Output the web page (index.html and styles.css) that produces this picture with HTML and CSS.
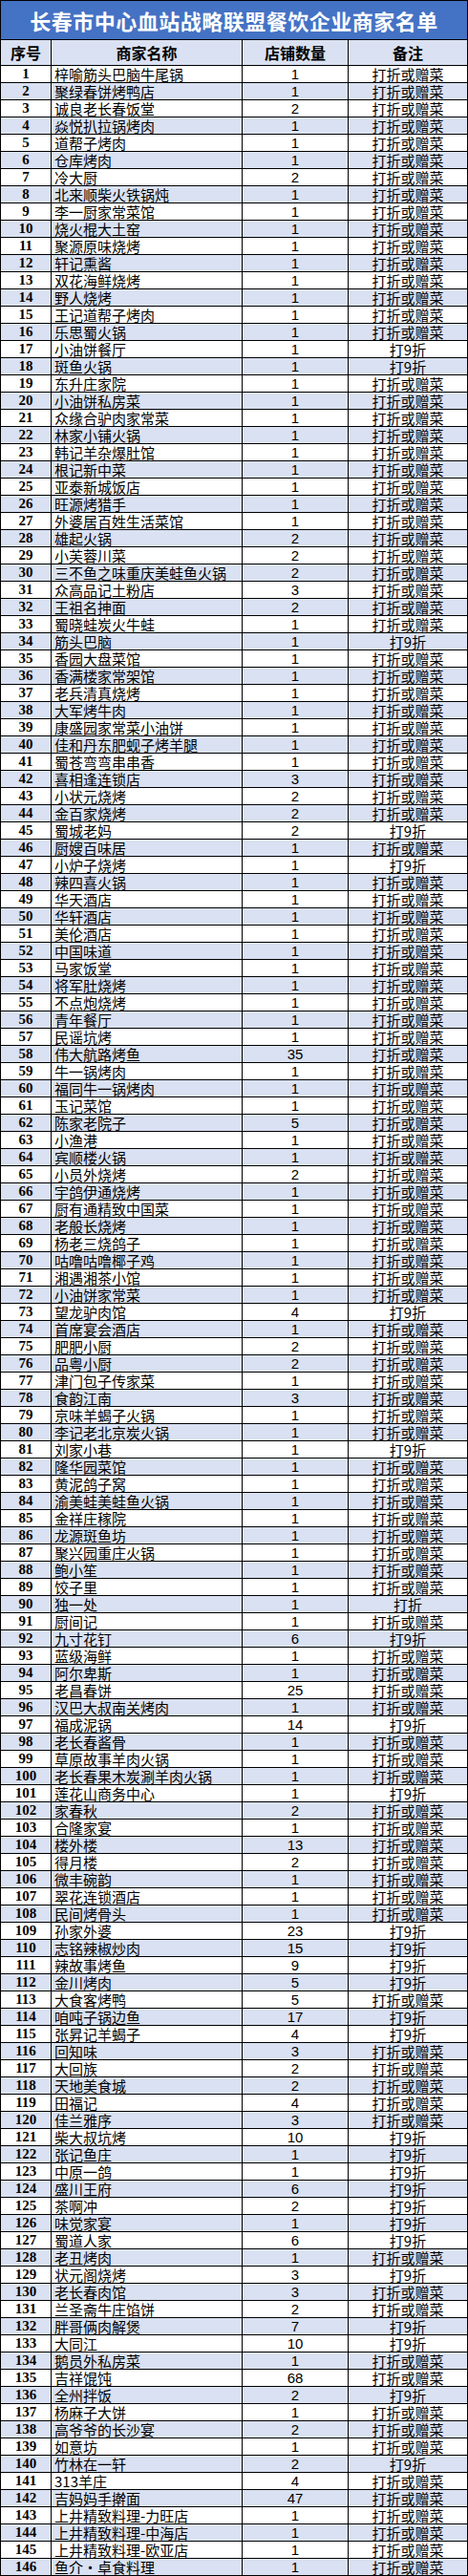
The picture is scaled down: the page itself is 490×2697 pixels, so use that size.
FILE: index.html
```html
<!DOCTYPE html>
<html lang="zh-CN">
<head>
<meta charset="utf-8">
<title>长春市中心血站战略联盟餐饮企业商家名单</title>
<link rel="stylesheet" href="styles.css">
</head>
<body>
<table class="list">
<colgroup><col class="c-no"><col class="c-name"><col class="c-count"><col class="c-note"></colgroup>
<thead>
<tr class="title-row"><th colspan="4" class="title">长春市中心血站战略联盟餐饮企业商家名单</th></tr>
<tr class="head-row"><th>序号</th><th>商家名称</th><th>店铺数量</th><th>备注</th></tr>
</thead>
<tbody>
<tr><td class="no">1</td><td class="name">梓喻筋头巴脑牛尾锅</td><td class="cnt">1</td><td class="note">打折或赠菜</td></tr>
<tr><td class="no">2</td><td class="name">聚绿春饼烤鸭店</td><td class="cnt">1</td><td class="note">打折或赠菜</td></tr>
<tr><td class="no">3</td><td class="name">诚良老长春饭堂</td><td class="cnt">2</td><td class="note">打折或赠菜</td></tr>
<tr><td class="no">4</td><td class="name">焱悦扒拉锅烤肉</td><td class="cnt">1</td><td class="note">打折或赠菜</td></tr>
<tr><td class="no">5</td><td class="name">道帮子烤肉</td><td class="cnt">1</td><td class="note">打折或赠菜</td></tr>
<tr><td class="no">6</td><td class="name">仓库烤肉</td><td class="cnt">1</td><td class="note">打折或赠菜</td></tr>
<tr><td class="no">7</td><td class="name">冷大厨</td><td class="cnt">2</td><td class="note">打折或赠菜</td></tr>
<tr><td class="no">8</td><td class="name">北来顺柴火铁锅炖</td><td class="cnt">1</td><td class="note">打折或赠菜</td></tr>
<tr><td class="no">9</td><td class="name">李一厨家常菜馆</td><td class="cnt">1</td><td class="note">打折或赠菜</td></tr>
<tr><td class="no">10</td><td class="name">烧火棍大土窑</td><td class="cnt">1</td><td class="note">打折或赠菜</td></tr>
<tr><td class="no">11</td><td class="name">聚源原味烧烤</td><td class="cnt">1</td><td class="note">打折或赠菜</td></tr>
<tr><td class="no">12</td><td class="name">轩记熏酱</td><td class="cnt">1</td><td class="note">打折或赠菜</td></tr>
<tr><td class="no">13</td><td class="name">双花海鲜烧烤</td><td class="cnt">1</td><td class="note">打折或赠菜</td></tr>
<tr><td class="no">14</td><td class="name">野人烧烤</td><td class="cnt">1</td><td class="note">打折或赠菜</td></tr>
<tr><td class="no">15</td><td class="name">王记道帮子烤肉</td><td class="cnt">1</td><td class="note">打折或赠菜</td></tr>
<tr><td class="no">16</td><td class="name">乐思蜀火锅</td><td class="cnt">1</td><td class="note">打折或赠菜</td></tr>
<tr><td class="no">17</td><td class="name">小油饼餐厅</td><td class="cnt">1</td><td class="note">打9折</td></tr>
<tr><td class="no">18</td><td class="name">斑鱼火锅</td><td class="cnt">1</td><td class="note">打9折</td></tr>
<tr><td class="no">19</td><td class="name">东升庄家院</td><td class="cnt">1</td><td class="note">打折或赠菜</td></tr>
<tr><td class="no">20</td><td class="name">小油饼私房菜</td><td class="cnt">1</td><td class="note">打折或赠菜</td></tr>
<tr><td class="no">21</td><td class="name">众缘合驴肉家常菜</td><td class="cnt">1</td><td class="note">打折或赠菜</td></tr>
<tr><td class="no">22</td><td class="name">林家小铺火锅</td><td class="cnt">1</td><td class="note">打折或赠菜</td></tr>
<tr><td class="no">23</td><td class="name">韩记羊杂爆肚馆</td><td class="cnt">1</td><td class="note">打折或赠菜</td></tr>
<tr><td class="no">24</td><td class="name">根记新中菜</td><td class="cnt">1</td><td class="note">打折或赠菜</td></tr>
<tr><td class="no">25</td><td class="name">亚泰新城饭店</td><td class="cnt">1</td><td class="note">打折或赠菜</td></tr>
<tr><td class="no">26</td><td class="name">旺源烤猎手</td><td class="cnt">1</td><td class="note">打折或赠菜</td></tr>
<tr><td class="no">27</td><td class="name">外婆居百姓生活菜馆</td><td class="cnt">1</td><td class="note">打折或赠菜</td></tr>
<tr><td class="no">28</td><td class="name">雄起火锅</td><td class="cnt">2</td><td class="note">打折或赠菜</td></tr>
<tr><td class="no">29</td><td class="name">小芙蓉川菜</td><td class="cnt">2</td><td class="note">打折或赠菜</td></tr>
<tr><td class="no">30</td><td class="name">三不鱼之味重庆美蛙鱼火锅</td><td class="cnt">2</td><td class="note">打折或赠菜</td></tr>
<tr><td class="no">31</td><td class="name">众高品记土粉店</td><td class="cnt">3</td><td class="note">打折或赠菜</td></tr>
<tr><td class="no">32</td><td class="name">王祖名抻面</td><td class="cnt">2</td><td class="note">打折或赠菜</td></tr>
<tr><td class="no">33</td><td class="name">蜀晓蛙炭火牛蛙</td><td class="cnt">1</td><td class="note">打折或赠菜</td></tr>
<tr><td class="no">34</td><td class="name">筋头巴脑</td><td class="cnt">1</td><td class="note">打9折</td></tr>
<tr><td class="no">35</td><td class="name">香园大盘菜馆</td><td class="cnt">1</td><td class="note">打折或赠菜</td></tr>
<tr><td class="no">36</td><td class="name">香满楼家常架馆</td><td class="cnt">1</td><td class="note">打折或赠菜</td></tr>
<tr><td class="no">37</td><td class="name">老兵清真烧烤</td><td class="cnt">1</td><td class="note">打折或赠菜</td></tr>
<tr><td class="no">38</td><td class="name">大军烤牛肉</td><td class="cnt">1</td><td class="note">打折或赠菜</td></tr>
<tr><td class="no">39</td><td class="name">康盛园家常菜小油饼</td><td class="cnt">1</td><td class="note">打折或赠菜</td></tr>
<tr><td class="no">40</td><td class="name">佳和丹东肥蚬子烤羊腿</td><td class="cnt">1</td><td class="note">打折或赠菜</td></tr>
<tr><td class="no">41</td><td class="name">蜀苍弯弯串串香</td><td class="cnt">1</td><td class="note">打折或赠菜</td></tr>
<tr><td class="no">42</td><td class="name">喜相逢连锁店</td><td class="cnt">3</td><td class="note">打折或赠菜</td></tr>
<tr><td class="no">43</td><td class="name">小状元烧烤</td><td class="cnt">2</td><td class="note">打折或赠菜</td></tr>
<tr><td class="no">44</td><td class="name">金百家烧烤</td><td class="cnt">2</td><td class="note">打折或赠菜</td></tr>
<tr><td class="no">45</td><td class="name">蜀城老妈</td><td class="cnt">2</td><td class="note">打9折</td></tr>
<tr><td class="no">46</td><td class="name">厨嫂百味居</td><td class="cnt">1</td><td class="note">打折或赠菜</td></tr>
<tr><td class="no">47</td><td class="name">小炉子烧烤</td><td class="cnt">1</td><td class="note">打9折</td></tr>
<tr><td class="no">48</td><td class="name">辣四喜火锅</td><td class="cnt">1</td><td class="note">打折或赠菜</td></tr>
<tr><td class="no">49</td><td class="name">华天酒店</td><td class="cnt">1</td><td class="note">打折或赠菜</td></tr>
<tr><td class="no">50</td><td class="name">华轩酒店</td><td class="cnt">1</td><td class="note">打折或赠菜</td></tr>
<tr><td class="no">51</td><td class="name">美伦酒店</td><td class="cnt">1</td><td class="note">打折或赠菜</td></tr>
<tr><td class="no">52</td><td class="name">中国味道</td><td class="cnt">1</td><td class="note">打折或赠菜</td></tr>
<tr><td class="no">53</td><td class="name">马家饭堂</td><td class="cnt">1</td><td class="note">打折或赠菜</td></tr>
<tr><td class="no">54</td><td class="name">将军肚烧烤</td><td class="cnt">1</td><td class="note">打折或赠菜</td></tr>
<tr><td class="no">55</td><td class="name">不点炮烧烤</td><td class="cnt">1</td><td class="note">打折或赠菜</td></tr>
<tr><td class="no">56</td><td class="name">青年餐厅</td><td class="cnt">1</td><td class="note">打折或赠菜</td></tr>
<tr><td class="no">57</td><td class="name">民谣坑烤</td><td class="cnt">1</td><td class="note">打折或赠菜</td></tr>
<tr><td class="no">58</td><td class="name">伟大航路烤鱼</td><td class="cnt">35</td><td class="note">打折或赠菜</td></tr>
<tr><td class="no">59</td><td class="name">牛一锅烤肉</td><td class="cnt">1</td><td class="note">打折或赠菜</td></tr>
<tr><td class="no">60</td><td class="name">福同牛一锅烤肉</td><td class="cnt">1</td><td class="note">打折或赠菜</td></tr>
<tr><td class="no">61</td><td class="name">玉记菜馆</td><td class="cnt">1</td><td class="note">打折或赠菜</td></tr>
<tr><td class="no">62</td><td class="name">陈家老院子</td><td class="cnt">5</td><td class="note">打折或赠菜</td></tr>
<tr><td class="no">63</td><td class="name">小渔港</td><td class="cnt">1</td><td class="note">打折或赠菜</td></tr>
<tr><td class="no">64</td><td class="name">宾顺楼火锅</td><td class="cnt">1</td><td class="note">打折或赠菜</td></tr>
<tr><td class="no">65</td><td class="name">小员外烧烤</td><td class="cnt">2</td><td class="note">打折或赠菜</td></tr>
<tr><td class="no">66</td><td class="name">宇鸽伊通烧烤</td><td class="cnt">1</td><td class="note">打折或赠菜</td></tr>
<tr><td class="no">67</td><td class="name">厨有通精致中国菜</td><td class="cnt">1</td><td class="note">打折或赠菜</td></tr>
<tr><td class="no">68</td><td class="name">老般长烧烤</td><td class="cnt">1</td><td class="note">打折或赠菜</td></tr>
<tr><td class="no">69</td><td class="name">杨老三烧鸽子</td><td class="cnt">1</td><td class="note">打折或赠菜</td></tr>
<tr><td class="no">70</td><td class="name">咕噜咕噜椰子鸡</td><td class="cnt">1</td><td class="note">打折或赠菜</td></tr>
<tr><td class="no">71</td><td class="name">湘遇湘茶小馆</td><td class="cnt">1</td><td class="note">打折或赠菜</td></tr>
<tr><td class="no">72</td><td class="name">小油饼家常菜</td><td class="cnt">1</td><td class="note">打折或赠菜</td></tr>
<tr><td class="no">73</td><td class="name">望龙驴肉馆</td><td class="cnt">4</td><td class="note">打9折</td></tr>
<tr><td class="no">74</td><td class="name">首席宴会酒店</td><td class="cnt">1</td><td class="note">打折或赠菜</td></tr>
<tr><td class="no">75</td><td class="name">肥肥小厨</td><td class="cnt">2</td><td class="note">打折或赠菜</td></tr>
<tr><td class="no">76</td><td class="name">品粤小厨</td><td class="cnt">2</td><td class="note">打折或赠菜</td></tr>
<tr><td class="no">77</td><td class="name">津门包子传家菜</td><td class="cnt">1</td><td class="note">打折或赠菜</td></tr>
<tr><td class="no">78</td><td class="name">食韵江南</td><td class="cnt">3</td><td class="note">打折或赠菜</td></tr>
<tr><td class="no">79</td><td class="name">京味羊蝎子火锅</td><td class="cnt">1</td><td class="note">打折或赠菜</td></tr>
<tr><td class="no">80</td><td class="name">李记老北京炭火锅</td><td class="cnt">1</td><td class="note">打折或赠菜</td></tr>
<tr><td class="no">81</td><td class="name">刘家小巷</td><td class="cnt">1</td><td class="note">打9折</td></tr>
<tr><td class="no">82</td><td class="name">隆华园菜馆</td><td class="cnt">1</td><td class="note">打折或赠菜</td></tr>
<tr><td class="no">83</td><td class="name">黄泥鸽子窝</td><td class="cnt">1</td><td class="note">打折或赠菜</td></tr>
<tr><td class="no">84</td><td class="name">渝美蛙美蛙鱼火锅</td><td class="cnt">1</td><td class="note">打折或赠菜</td></tr>
<tr><td class="no">85</td><td class="name">金祥庄稼院</td><td class="cnt">1</td><td class="note">打折或赠菜</td></tr>
<tr><td class="no">86</td><td class="name">龙源斑鱼坊</td><td class="cnt">1</td><td class="note">打折或赠菜</td></tr>
<tr><td class="no">87</td><td class="name">聚兴园重庄火锅</td><td class="cnt">1</td><td class="note">打折或赠菜</td></tr>
<tr><td class="no">88</td><td class="name">鲍小笙</td><td class="cnt">1</td><td class="note">打折或赠菜</td></tr>
<tr><td class="no">89</td><td class="name">饺子里</td><td class="cnt">1</td><td class="note">打折或赠菜</td></tr>
<tr><td class="no">90</td><td class="name">独一处</td><td class="cnt">1</td><td class="note">打折</td></tr>
<tr><td class="no">91</td><td class="name">厨间记</td><td class="cnt">1</td><td class="note">打折或赠菜</td></tr>
<tr><td class="no">92</td><td class="name">九寸花钉</td><td class="cnt">6</td><td class="note">打9折</td></tr>
<tr><td class="no">93</td><td class="name">蓝级海鲜</td><td class="cnt">1</td><td class="note">打折或赠菜</td></tr>
<tr><td class="no">94</td><td class="name">阿尔卑斯</td><td class="cnt">1</td><td class="note">打折或赠菜</td></tr>
<tr><td class="no">95</td><td class="name">老昌春饼</td><td class="cnt">25</td><td class="note">打折或赠菜</td></tr>
<tr><td class="no">96</td><td class="name">汉巴大叔南关烤肉</td><td class="cnt">1</td><td class="note">打折或赠菜</td></tr>
<tr><td class="no">97</td><td class="name">福成泥锅</td><td class="cnt">14</td><td class="note">打9折</td></tr>
<tr><td class="no">98</td><td class="name">老长春酱骨</td><td class="cnt">1</td><td class="note">打折或赠菜</td></tr>
<tr><td class="no">99</td><td class="name">草原故事羊肉火锅</td><td class="cnt">1</td><td class="note">打折或赠菜</td></tr>
<tr><td class="no">100</td><td class="name">老长春果木炭涮羊肉火锅</td><td class="cnt">1</td><td class="note">打折或赠菜</td></tr>
<tr><td class="no">101</td><td class="name">莲花山商务中心</td><td class="cnt">1</td><td class="note">打9折</td></tr>
<tr><td class="no">102</td><td class="name">家春秋</td><td class="cnt">2</td><td class="note">打折或赠菜</td></tr>
<tr><td class="no">103</td><td class="name">合隆家宴</td><td class="cnt">1</td><td class="note">打折或赠菜</td></tr>
<tr><td class="no">104</td><td class="name">楼外楼</td><td class="cnt">13</td><td class="note">打折或赠菜</td></tr>
<tr><td class="no">105</td><td class="name">得月楼</td><td class="cnt">2</td><td class="note">打折或赠菜</td></tr>
<tr><td class="no">106</td><td class="name">微丰碗韵</td><td class="cnt">1</td><td class="note">打折或赠菜</td></tr>
<tr><td class="no">107</td><td class="name">翠花连锁酒店</td><td class="cnt">1</td><td class="note">打折或赠菜</td></tr>
<tr><td class="no">108</td><td class="name">民间烤骨头</td><td class="cnt">1</td><td class="note">打折或赠菜</td></tr>
<tr><td class="no">109</td><td class="name">孙家外婆</td><td class="cnt">23</td><td class="note">打9折</td></tr>
<tr><td class="no">110</td><td class="name">志铭辣椒炒肉</td><td class="cnt">15</td><td class="note">打9折</td></tr>
<tr><td class="no">111</td><td class="name">辣故事烤鱼</td><td class="cnt">9</td><td class="note">打9折</td></tr>
<tr><td class="no">112</td><td class="name">金川烤肉</td><td class="cnt">5</td><td class="note">打9折</td></tr>
<tr><td class="no">113</td><td class="name">大食客烤鸭</td><td class="cnt">5</td><td class="note">打折或赠菜</td></tr>
<tr><td class="no">114</td><td class="name">咱吨子锅边鱼</td><td class="cnt">17</td><td class="note">打9折</td></tr>
<tr><td class="no">115</td><td class="name">张昇记羊蝎子</td><td class="cnt">4</td><td class="note">打9折</td></tr>
<tr><td class="no">116</td><td class="name">回知味</td><td class="cnt">3</td><td class="note">打折或赠菜</td></tr>
<tr><td class="no">117</td><td class="name">大回族</td><td class="cnt">2</td><td class="note">打折或赠菜</td></tr>
<tr><td class="no">118</td><td class="name">天地美食城</td><td class="cnt">2</td><td class="note">打折或赠菜</td></tr>
<tr><td class="no">119</td><td class="name">田福记</td><td class="cnt">4</td><td class="note">打折或赠菜</td></tr>
<tr><td class="no">120</td><td class="name">佳兰雅序</td><td class="cnt">3</td><td class="note">打折或赠菜</td></tr>
<tr><td class="no">121</td><td class="name">柴大叔坑烤</td><td class="cnt">10</td><td class="note">打9折</td></tr>
<tr><td class="no">122</td><td class="name">张记鱼庄</td><td class="cnt">1</td><td class="note">打9折</td></tr>
<tr><td class="no">123</td><td class="name">中原一鸽</td><td class="cnt">1</td><td class="note">打9折</td></tr>
<tr><td class="no">124</td><td class="name">盛川王府</td><td class="cnt">6</td><td class="note">打9折</td></tr>
<tr><td class="no">125</td><td class="name">茶啊冲</td><td class="cnt">2</td><td class="note">打9折</td></tr>
<tr><td class="no">126</td><td class="name">味觉家宴</td><td class="cnt">1</td><td class="note">打9折</td></tr>
<tr><td class="no">127</td><td class="name">蜀道人家</td><td class="cnt">6</td><td class="note">打9折</td></tr>
<tr><td class="no">128</td><td class="name">老丑烤肉</td><td class="cnt">1</td><td class="note">打折或赠菜</td></tr>
<tr><td class="no">129</td><td class="name">状元阁烧烤</td><td class="cnt">3</td><td class="note">打9折</td></tr>
<tr><td class="no">130</td><td class="name">老长春肉馆</td><td class="cnt">3</td><td class="note">打折或赠菜</td></tr>
<tr><td class="no">131</td><td class="name">兰圣斋牛庄馅饼</td><td class="cnt">2</td><td class="note">打折或赠菜</td></tr>
<tr><td class="no">132</td><td class="name">胖哥俩肉解煲</td><td class="cnt">7</td><td class="note">打9折</td></tr>
<tr><td class="no">133</td><td class="name">大同江</td><td class="cnt">10</td><td class="note">打9折</td></tr>
<tr><td class="no">134</td><td class="name">鹅员外私房菜</td><td class="cnt">1</td><td class="note">打折或赠菜</td></tr>
<tr><td class="no">135</td><td class="name">吉祥馄饨</td><td class="cnt">68</td><td class="note">打折或赠菜</td></tr>
<tr><td class="no">136</td><td class="name">全州拌饭</td><td class="cnt">2</td><td class="note">打9折</td></tr>
<tr><td class="no">137</td><td class="name">杨麻子大饼</td><td class="cnt">1</td><td class="note">打折或赠菜</td></tr>
<tr><td class="no">138</td><td class="name">高爷爷的长沙宴</td><td class="cnt">2</td><td class="note">打折或赠菜</td></tr>
<tr><td class="no">139</td><td class="name">如意坊</td><td class="cnt">1</td><td class="note">打折或赠菜</td></tr>
<tr><td class="no">140</td><td class="name">竹林在一轩</td><td class="cnt">2</td><td class="note">打9折</td></tr>
<tr><td class="no">141</td><td class="name">313羊庄</td><td class="cnt">4</td><td class="note">打折或赠菜</td></tr>
<tr><td class="no">142</td><td class="name">吉妈妈手擀面</td><td class="cnt">47</td><td class="note">打折或赠菜</td></tr>
<tr><td class="no">143</td><td class="name">上井精致料理-力旺店</td><td class="cnt">1</td><td class="note">打折或赠菜</td></tr>
<tr><td class="no">144</td><td class="name">上井精致料理-中海店</td><td class="cnt">1</td><td class="note">打折或赠菜</td></tr>
<tr><td class="no">145</td><td class="name">上井精致料理-欧亚店</td><td class="cnt">1</td><td class="note">打折或赠菜</td></tr>
<tr><td class="no">146</td><td class="name">鱼介·卓食料理</td><td class="cnt">1</td><td class="note">打折或赠菜</td></tr>
</tbody>
</table>
</body>
</html>
```
FILE: styles.css
```css
html, body {
  margin: 0;
  padding: 0;
  background: #ffffff;
}
body {
  font-family: "Noto Sans CJK SC", "Noto Sans", sans-serif;
  color: #000000;
}
.list {
  border-collapse: collapse;
  table-layout: fixed;
  width: 489px;
}
.c-no { width: 53px; }
.c-name { width: 200px; }
.c-count { width: 111px; }
.c-note { width: 125px; }
.list th, .list td {
  border: 1px solid #000000;
  padding: 0;
  overflow: hidden;
  white-space: nowrap;
}
.title-row { height: 41px; }
.title {
  background: #4472c4;
  color: #ffffff;
  font-size: 22px;
  font-weight: 700;
  letter-spacing: 0.5px;
  text-align: center;
  vertical-align: middle;
  line-height: 40px;
}
.head-row { height: 27px; }
.head-row th {
  background: #d9e1f2;
  font-size: 16px;
  font-weight: 700;
  text-align: center;
  vertical-align: middle;
  line-height: 26px;
}
.list tbody tr { height: 18px; }
.list tbody tr:nth-child(even) td { background: #d9e1f2; }
.list td {
  font-size: 15px;
  line-height: 17px;
  vertical-align: bottom;
}
.no {
  font-family: "Liberation Serif", "DejaVu Serif", serif;
  font-weight: 700;
  font-size: 15px;
  text-align: center;
}
.name {
  text-align: left;
  padding-left: 3px !important;
}
.cnt, .note {
  text-align: center;
}
.cnt {
  font-family: "Liberation Sans", "Noto Sans CJK SC", sans-serif;
  font-weight: 400;
}
.note {
  font-weight: 400;
}
```
